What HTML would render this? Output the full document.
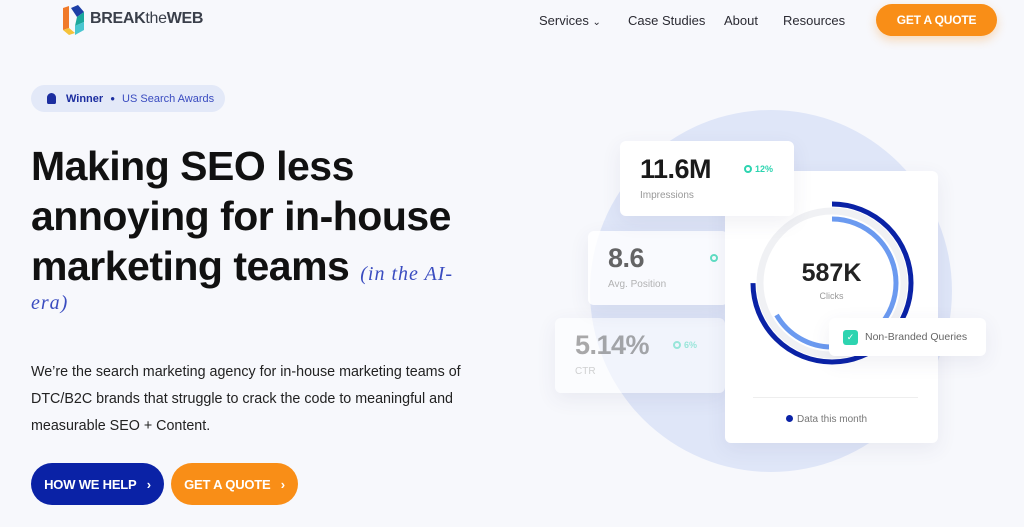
<!DOCTYPE html>
<html><head><meta charset="utf-8">
<style>
*{margin:0;padding:0;box-sizing:border-box}
body{width:1024px;height:527px;overflow:hidden;background:#f7f8fc;font-family:"Liberation Sans",sans-serif;position:relative}
.a{position:absolute}
.nav{font-size:13px;color:#2b2b33;top:13px}
.btn{position:absolute;border-radius:22px;color:#fff;font-weight:bold;font-size:13px;display:flex;align-items:center;justify-content:center;letter-spacing:-0.2px}
.card{position:absolute;background:#fff;border-radius:6px;box-shadow:0 6px 20px rgba(60,70,120,.08)}
.big{font-weight:bold;color:#1a1a1a;font-size:27px;letter-spacing:-0.5px}
.lbl{font-size:10px;color:#999}
.pct{font-size:9px;color:#2dd4b0;font-weight:bold}
.dot{display:inline-block;width:8px;height:8px;border-radius:50%;border:2.5px solid #2dd4b0;vertical-align:-1px;margin-right:3px}
</style></head><body>
<svg class="a" style="left:61px;top:4px" width="24" height="32" viewBox="0 0 24 32">
<path d="M2 4 L8 2 L8 24 L2 26Z" fill="#f07a2a"/>
<path d="M2 26 L8 24 L14 29 L8 31Z" fill="#f5c23a"/>
<path d="M10 4 L17 1 L23 8 L16 13Z" fill="#1d3fa6"/>
<path d="M16 13 L23 8 L23 18 L14 22Z" fill="#1ba89c"/>
<path d="M14 22 L23 18 L23 26 L14 31Z" fill="#49c6d0"/>
</svg>
<div class="a" style="left:90px;top:10px;font-size:16px;font-weight:bold;color:#3a3f4a;letter-spacing:-0.3px">BREAK<span style="font-weight:normal">the</span>WEB</div>
<div class="a nav" style="left:539px">Services <span style="font-size:10px">&#8964;</span></div>
<div class="a nav" style="left:628px">Case Studies</div>
<div class="a nav" style="left:724px">About</div>
<div class="a nav" style="left:783px">Resources</div>
<div class="btn" style="left:876px;top:4px;width:121px;height:32px;background:#f98e17;font-size:12px;box-shadow:0 4px 10px rgba(249,142,23,.3)">GET A QUOTE</div>

<div class="a" style="left:31px;top:85px;width:194px;height:27px;border-radius:14px;background:#e3e9f8;font-size:11px;display:flex;align-items:center">
<span style="margin-left:16px;width:9px;height:11px;background:#1c2ea0;border-radius:5px 5px 2px 2px;display:inline-block"></span>
<b style="color:#1c2ea0;margin-left:10px">Winner</b><span style="color:#1c2ea0;margin:0 7px;font-size:8px">&#9679;</span><span style="color:#3a4cc0">US Search Awards</span></div>

<div class="a" style="left:31px;top:141px;font-size:41px;font-weight:bold;color:#111;line-height:50px;letter-spacing:-0.5px;white-space:nowrap">Making SEO less<br>annoying for in-house<br>marketing teams <span style="font-family:'Liberation Serif',serif;font-style:italic;font-weight:normal;font-size:20px;color:#3a4cc0;letter-spacing:1px">(in the AI-</span></div>
<div class="a" style="left:31px;top:292px;font-family:'Liberation Serif',serif;font-style:italic;font-size:20px;color:#3a4cc0;letter-spacing:1px">era)</div>

<div class="a" style="left:31px;top:359px;font-size:14.3px;color:#222;line-height:27px">We’re the search marketing agency for in-house marketing teams of<br>DTC/B2C brands that struggle to crack the code to meaningful and<br>measurable SEO + Content.</div>

<div class="btn" style="left:31px;top:463px;width:133px;height:42px;background:#0a22a6">HOW WE HELP&nbsp;&nbsp;&nbsp;›</div>
<div class="btn" style="left:171px;top:463px;width:127px;height:42px;background:#f98e17">GET A QUOTE&nbsp;&nbsp;&nbsp;›</div>

<div class="a" style="left:590px;top:110px;width:362px;height:362px;border-radius:50%;background:#dfe6f8"></div>

<div class="card" style="left:555px;top:318px;width:170px;height:75px;background:rgba(255,255,255,.55)">
<div style="opacity:.45"><div class="a big" style="left:20px;top:12px;color:#444">5.14%</div><div class="a pct" style="left:118px;top:22px"><span class="dot"></span>6%</div>
<div class="a lbl" style="left:20px;top:48px">CTR</div></div></div>
<div class="card" style="left:588px;top:231px;width:140px;height:74px;background:rgba(255,255,255,.8)">
<div style="opacity:.75"><div class="a big" style="left:20px;top:12px;color:#333">8.6</div><div class="a pct" style="left:122px;top:22px"><span class="dot"></span></div>
<div class="a lbl" style="left:20px;top:48px">Avg. Position</div></div></div>

<div class="card" style="left:725px;top:171px;width:213px;height:272px">
<svg class="a" style="left:25px;top:30px" width="165" height="165" viewBox="0 0 165 165">
<circle cx="82" cy="82" r="72" fill="none" stroke="#f0f1f4" stroke-width="7"/>
<circle cx="82" cy="82" r="79" fill="none" stroke="#0a22a6" stroke-width="5" stroke-dasharray="372 500" transform="rotate(-90 82 82)"/>
<circle cx="82" cy="82" r="64" fill="none" stroke="#6b9af0" stroke-width="5" stroke-dasharray="268 500" transform="rotate(-90 82 82)"/>
</svg>
<div class="a" style="left:0;width:213px;text-align:center;top:88px;font-size:25px;font-weight:bold;color:#222">587K</div>
<div class="a lbl" style="left:0;width:213px;text-align:center;top:120px;font-size:9px">Clicks</div>
<div class="a" style="left:28px;top:226px;width:165px;height:1px;background:#eee"></div>
<div class="a" style="left:61px;top:243px;font-size:10px;color:#777"><span style="display:inline-block;width:7px;height:7px;border-radius:50%;background:#0a22a6;margin-right:4px"></span>Data this month</div>
</div>

<div class="card" style="left:620px;top:141px;width:174px;height:75px">
<div class="a big" style="left:20px;top:13px">11.6M</div><div class="a pct" style="left:124px;top:23px"><span class="dot"></span>12%</div>
<div class="a lbl" style="left:20px;top:49px">Impressions</div></div>

<div class="card" style="left:829px;top:318px;width:157px;height:38px;display:flex;align-items:center">
<span style="margin-left:14px;width:15px;height:15px;border-radius:3px;background:#2dd4b0;color:#fff;font-size:9px;text-align:center;line-height:15px">✓</span>
<span style="margin-left:7px;font-size:10.5px;color:#666">Non-Branded Queries</span></div>
</body></html>
